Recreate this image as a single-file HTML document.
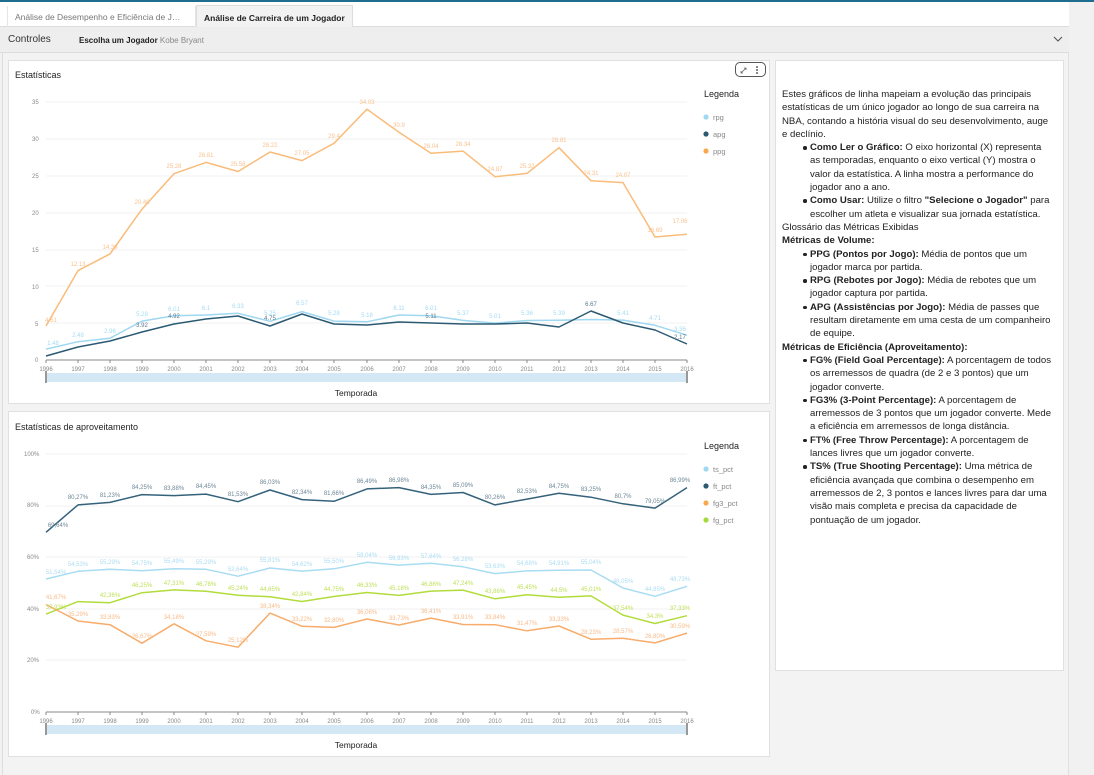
<!DOCTYPE html>
<html><head><meta charset="utf-8"><style>
*{margin:0;padding:0;box-sizing:border-box}
body{width:1094px;height:775px;overflow:hidden;background:#f2f2f2;font-family:"Liberation Sans",sans-serif;position:relative;color:#16191f}
.top{position:absolute;left:0;top:0;width:1094px;height:2px;background:#1c6d8f}
.tabs{position:absolute;left:0;top:2px;width:1069px;height:25px;background:#fff;border-bottom:1px solid #ddd}
.tab1{position:absolute;left:7px;top:4px;width:189px;height:21px;border-left:1px solid #e5e5e5;border-right:1px solid #e5e5e5;font-size:8.5px;color:#777;padding:6px 0 0 7px;white-space:nowrap;overflow:hidden}
.tab2{position:absolute;left:196px;top:3px;width:157px;height:24px;background:#f2f2f2;border:1px solid #ddd;border-bottom:none;font-size:8.5px;font-weight:bold;color:#222;padding:7px 0 0 7px;white-space:nowrap}
.ctrl{position:absolute;left:0;top:27px;width:1069px;height:26px;background:#eeeeee;border-bottom:1px solid #dcdcdc}
.ctrl .a{position:absolute;left:8px;top:7px;font-size:10px;color:#333}
.ctrl .b{position:absolute;left:79px;top:9px;font-size:8px;color:#222;font-weight:bold}
.ctrl .b span{font-weight:normal;color:#888}
.main{position:absolute;left:2px;top:53px;width:1067px;height:722px;background:#f3f3f3;border-left:1px solid #ddd;border-right:1px solid #e0e0e0}
.side{position:absolute;left:1069px;top:2px;width:25px;height:773px;background:#f1f1f1}
.panel{position:absolute;background:#fff;border:1px solid #e0e0e0}
.ptitle{position:absolute;left:7px;font-size:9px;color:#222}
.txt{position:absolute;left:782px;top:88px;width:272px;font-size:9.6px;line-height:13.3px;color:#222}
.txt ul{margin-left:21px;list-style:none}
.txt li{position:relative;padding-left:7px}
.txt li:before{content:"";position:absolute;left:0;top:5px;width:3.5px;height:3.5px;border-radius:50%;background:#222}
svg text{font-family:"Liberation Sans",sans-serif}
</style></head><body>
<div class="top"></div>
<div class="tabs">
<div class="tab1">Análise de Desempenho e Eficiência de J…</div>
<div class="tab2">Análise de Carreira de um Jogador</div>
</div>
<div class="ctrl"><div class="a">Controles</div><div class="b">Escolha um Jogador <span>Kobe Bryant</span></div>
<svg style="position:absolute;left:1053px;top:9px" width="10" height="7"><path d="M1 1L5 5L9 1" fill="none" stroke="#555" stroke-width="1.1"/></svg></div>
<div class="main"></div>
<div class="side"></div>

<div class="panel" style="left:8px;top:60px;width:762px;height:344px"></div>
<div class="panel" style="left:8px;top:411px;width:762px;height:346px"></div>
<div class="panel" style="left:775px;top:60px;width:289px;height:611px"></div>
<div class="ptitle" style="left:15px;top:70px">Estatísticas</div>
<div class="ptitle" style="left:15px;top:422px">Estatísticas de aproveitamento</div>
<div style="position:absolute;left:735px;top:62px;width:31px;height:15px;border:1px solid #555;border-radius:5px;background:#fff"></div>
<svg style="position:absolute;left:739px;top:65px" width="24" height="10"><path d="M2 8L7 3M5 3H7V5M2 6V8H4" fill="none" stroke="#666" stroke-width=".8"/><circle cx="18" cy="2" r=".9" fill="#333"/><circle cx="18" cy="5" r=".9" fill="#333"/><circle cx="18" cy="8" r=".9" fill="#333"/></svg>

<svg style="position:absolute;left:0;top:0" width="1094" height="775">
<g font-size="6" fill="#888">
<text x="32" y="104">35</text><text x="32" y="141">30</text><text x="32" y="178">25</text><text x="32" y="215">20</text><text x="32" y="252">15</text><text x="32" y="289">10</text><text x="35" y="326">5</text><text x="35" y="362">0</text>
<text x="24" y="456">100%</text><text x="27" y="507">80%</text><text x="27" y="559">60%</text><text x="27" y="611">40%</text><text x="27" y="662">20%</text><text x="31" y="714">0%</text>
</g>
<g stroke="#f0f0f0" stroke-width="1">
<path d="M46 102H687M46 139H687M46 176H687M46 213H687M46 250H687M46 286H687M46 323H687"/>
<path d="M46 454H687M46 506H687M46 557H687M46 609H687M46 660H687"/>
</g>
<path d="M46 360H687M46 712H687" stroke="#888" stroke-width="1"/>
<g stroke="#888" stroke-width="1">
<path d="M46 360v3M78 360v3M110 360v3M142 360v3M174 360v3M206 360v3M238 360v3M270 360v3M302 360v3M334 360v3M367 360v3M399 360v3M431 360v3M463 360v3M495 360v3M527 360v3M559 360v3M591 360v3M623 360v3M655 360v3M687 360v3"/>
<path d="M46 712v3M78 712v3M110 712v3M142 712v3M174 712v3M206 712v3M238 712v3M270 712v3M302 712v3M334 712v3M367 712v3M399 712v3M431 712v3M463 712v3M495 712v3M527 712v3M559 712v3M591 712v3M623 712v3M655 712v3M687 712v3"/>
</g>
<g font-size="6" fill="#888" text-anchor="middle">
<text x="46" y="371">1996</text><text x="78" y="371">1997</text><text x="110" y="371">1998</text><text x="142" y="371">1999</text><text x="174" y="371">2000</text><text x="206" y="371">2001</text><text x="238" y="371">2002</text><text x="270" y="371">2003</text><text x="302" y="371">2004</text><text x="334" y="371">2005</text><text x="367" y="371">2006</text><text x="399" y="371">2007</text><text x="431" y="371">2008</text><text x="463" y="371">2009</text><text x="495" y="371">2010</text><text x="527" y="371">2011</text><text x="559" y="371">2012</text><text x="591" y="371">2013</text><text x="623" y="371">2014</text><text x="655" y="371">2015</text><text x="687" y="371">2016</text>
<text x="46" y="723">1996</text><text x="78" y="723">1997</text><text x="110" y="723">1998</text><text x="142" y="723">1999</text><text x="174" y="723">2000</text><text x="206" y="723">2001</text><text x="238" y="723">2002</text><text x="270" y="723">2003</text><text x="302" y="723">2004</text><text x="334" y="723">2005</text><text x="367" y="723">2006</text><text x="399" y="723">2007</text><text x="431" y="723">2008</text><text x="463" y="723">2009</text><text x="495" y="723">2010</text><text x="527" y="723">2011</text><text x="559" y="723">2012</text><text x="591" y="723">2013</text><text x="623" y="723">2014</text><text x="655" y="723">2015</text><text x="687" y="723">2016</text>
</g>
<rect x="46" y="373" width="641" height="9" fill="#d3e8f4"/><rect x="45" y="371" width="2" height="12" fill="#999"/><rect x="686" y="371" width="2" height="12" fill="#999"/>
<rect x="46" y="725" width="641" height="9" fill="#d3e8f4"/><rect x="45" y="723" width="2" height="12" fill="#999"/><rect x="686" y="723" width="2" height="12" fill="#999"/>
<g font-size="8.5" fill="#222" text-anchor="middle"><text x="356" y="396">Temporada</text><text x="356" y="748">Temporada</text></g>

<g fill="none" stroke-width="1.5" stroke-linejoin="round">
<polyline stroke="#f9bc7a" points="46,326 78,270.6 110,253.9 142,209.1 174,173.7 206,162.4 238,171.5 270,152 302,160.6 334,143.3 367,109.2 399,132.3 431,153.3 463,151.1 495,176.7 527,173.4 559,147.7 591,180.8 623,182.6 655,237 687,234.3"/>
<polyline stroke="#9fd8f0" points="46,349.1 78,341.7 110,338.2 142,321.1 174,315.7 206,315 238,313.3 270,321.3 302,311.6 334,321.1 367,321.8 399,315 431,315.7 463,320.4 495,323.1 527,320.5 559,320.3 591,319.5 623,320.1 655,325.3 687,335.2"/>
<polyline stroke="#2c5a73" points="46,356 78,347 110,341 142,332 174,324 206,319 238,316 270,326 302,314 334,324 367,325 399,322 431,323 463,324 495,324 527,323 559,327 591,311 623,323 655,330 687,344"/>
<polyline stroke="#34627b" points="46,532.3 78,504.9 110,502.4 142,494.6 174,495.6 206,494.1 238,501.7 270,490 302,499.6 334,501.3 367,488.9 399,487.6 431,494.4 463,492.5 495,504.9 527,499.1 559,493.3 591,497.2 623,503.8 655,508.1 687,487.6"/>
<polyline stroke="#a8dcf2" points="46,579 78,571.3 110,569.3 142,570.7 174,568.8 206,569.3 238,576.2 270,568 302,571.1 334,568.8 367,562.3 399,565.1 431,563.3 463,566.8 495,573.6 527,570.9 559,570.3 591,570 623,588 655,596.3 687,586.3"/>
<polyline stroke="#b2dc3c" points="46,614.1 78,601.6 110,602.7 142,592.7 174,589.9 206,591.3 238,595.3 270,596.8 302,601.5 334,596.5 367,592.5 399,595.4 431,591.1 463,590.1 495,598.8 527,594.7 559,597.2 591,595.9 623,615.1 655,623.5 687,615.7"/>
<polyline stroke="#f7ac6c" points="46,604.5 78,621 110,624.7 142,643.2 174,623.8 206,640.8 238,647.2 270,613.1 302,626.3 334,627.4 367,619 399,625 431,618.1 463,624.5 495,624.7 527,630.8 559,626 591,639.2 623,638.3 655,642.9 687,633.1"/>
</g>

<g font-size="6" text-anchor="middle" fill="#f8c290">
<text x="51" y="322">4.61</text><text x="78" y="266">12.13</text><text x="110" y="249">14.39</text><text x="142" y="204">20.48</text><text x="174" y="168">25.28</text><text x="206" y="157">26.81</text><text x="238" y="166">25.58</text><text x="270" y="147">28.22</text><text x="302" y="155">27.05</text><text x="334" y="138">29.4</text><text x="367" y="104">34.03</text><text x="399" y="127">30.9</text><text x="431" y="148">28.04</text><text x="463" y="146">28.34</text><text x="495" y="171">24.87</text><text x="527" y="168">25.32</text><text x="559" y="142">28.81</text><text x="591" y="175">24.31</text><text x="623" y="177">24.07</text><text x="655" y="232">16.69</text><text x="680" y="223">17.06</text>
</g>
<g font-size="6" text-anchor="middle" fill="#a5dcf2">
<text x="53" y="345">1.48</text><text x="78" y="337">2.48</text><text x="110" y="333">2.96</text><text x="142" y="316">5.28</text><text x="174" y="311">6.01</text><text x="206" y="310">6.1</text><text x="238" y="308">6.33</text><text x="270" y="315">5.25</text><text x="302" y="305">6.57</text><text x="334" y="315">5.28</text><text x="367" y="317">5.18</text><text x="399" y="310">6.11</text><text x="431" y="310">6.01</text><text x="463" y="315">5.37</text><text x="495" y="318">5.01</text><text x="527" y="315">5.36</text><text x="559" y="315">5.39</text><text x="623" y="315">5.41</text><text x="655" y="320">4.71</text><text x="680" y="331">3.36</text>
</g>
<g font-size="6" text-anchor="middle" fill="#5a7a8c">
<text x="142" y="327">3.92</text><text x="174" y="318">4.92</text><text x="270" y="320">4.75</text><text x="431" y="318">5.11</text><text x="591" y="306">6.67</text><text x="680" y="339">2.17</text>
</g>
<g font-size="6" text-anchor="middle" fill="#6d8797">
<text x="58" y="527">69,64%</text><text x="78" y="499">80,27%</text><text x="110" y="497">81,23%</text><text x="142" y="489">84,25%</text><text x="174" y="490">83,88%</text><text x="206" y="488">84,45%</text><text x="238" y="496">81,53%</text><text x="270" y="484">86,03%</text><text x="302" y="494">82,34%</text><text x="334" y="495">81,66%</text><text x="367" y="483">86,49%</text><text x="399" y="482">86,98%</text><text x="431" y="489">84,35%</text><text x="463" y="487">85,09%</text><text x="495" y="499">80,26%</text><text x="527" y="493">82,53%</text><text x="559" y="488">84,75%</text><text x="591" y="491">83,25%</text><text x="623" y="498">80,7%</text><text x="655" y="503">79,05%</text><text x="680" y="482">86,99%</text>
</g>
<g font-size="6" text-anchor="middle" fill="#abdcf2">
<text x="56" y="574">51,54%</text><text x="78" y="566">54,53%</text><text x="110" y="564">55,29%</text><text x="142" y="565">54,75%</text><text x="174" y="563">55,49%</text><text x="206" y="564">55,29%</text><text x="238" y="571">52,64%</text><text x="270" y="562">55,81%</text><text x="302" y="566">54,62%</text><text x="334" y="563">55,50%</text><text x="367" y="557">58,04%</text><text x="399" y="560">56,93%</text><text x="431" y="558">57,64%</text><text x="463" y="561">56,28%</text><text x="495" y="568">53,63%</text><text x="527" y="565">54,68%</text><text x="559" y="565">54,91%</text><text x="591" y="564">55,04%</text><text x="623" y="583">48,05%</text><text x="655" y="591">44,85%</text><text x="680" y="581">48,73%</text>
</g>
<g font-size="6" text-anchor="middle" fill="#bfe05a">
<text x="56" y="609">37,93%</text><text x="110" y="597">42,36%</text><text x="142" y="587">46,25%</text><text x="174" y="585">47,31%</text><text x="206" y="586">46,78%</text><text x="238" y="590">45,24%</text><text x="270" y="591">44,65%</text><text x="302" y="596">42,84%</text><text x="334" y="591">44,75%</text><text x="367" y="587">46,33%</text><text x="399" y="590">45,18%</text><text x="431" y="586">46,86%</text><text x="463" y="585">47,24%</text><text x="495" y="593">43,86%</text><text x="527" y="589">45,45%</text><text x="559" y="592">44,5%</text><text x="591" y="591">45,01%</text><text x="623" y="610">37,54%</text><text x="655" y="618">34,3%</text><text x="680" y="610">37,33%</text>
</g>
<g font-size="6" text-anchor="middle" fill="#f8bb88">
<text x="56" y="599">41,67%</text><text x="78" y="616">35,29%</text><text x="110" y="619">33,83%</text><text x="142" y="638">26,67%</text><text x="174" y="619">34,18%</text><text x="206" y="636">27,59%</text><text x="238" y="642">25,12%</text><text x="270" y="608">38,34%</text><text x="302" y="621">33,22%</text><text x="334" y="622">32,80%</text><text x="367" y="614">36,06%</text><text x="399" y="620">33,73%</text><text x="431" y="613">36,41%</text><text x="463" y="619">33,91%</text><text x="495" y="619">33,84%</text><text x="527" y="625">31,47%</text><text x="559" y="621">33,33%</text><text x="591" y="634">28,23%</text><text x="623" y="633">28,57%</text><text x="655" y="638">26,80%</text><text x="680" y="628">30,59%</text>
</g>

<g font-size="9" fill="#222"><text x="704" y="97">Legenda</text><text x="704" y="449">Legenda</text></g>
<g font-size="7.5" fill="#888">
<circle cx="706" cy="117" r="2.6" fill="#9fd8f0"/><text x="713" y="120">rpg</text>
<circle cx="706" cy="134" r="2.6" fill="#2c5a73"/><text x="713" y="137">apg</text>
<circle cx="706" cy="151" r="2.6" fill="#f8a94f"/><text x="713" y="154">ppg</text>
<circle cx="706" cy="469" r="2.6" fill="#9fd8f0"/><text x="713" y="472">ts_pct</text>
<circle cx="706" cy="486" r="2.6" fill="#2c5a73"/><text x="713" y="489">ft_pct</text>
<circle cx="706" cy="503" r="2.6" fill="#f8a94f"/><text x="713" y="506">fg3_pct</text>
<circle cx="706" cy="520" r="2.6" fill="#a6d93b"/><text x="713" y="523">fg_pct</text>
</g>
</svg>

<div class="txt">
Estes gráficos de linha mapeiam a evolução das principais estatísticas de um único jogador ao longo de sua carreira na NBA, contando a história visual do seu desenvolvimento, auge e declínio.
<ul><li><b>Como Ler o Gráfico:</b> O eixo horizontal (X) representa as temporadas, enquanto o eixo vertical (Y) mostra o valor da estatística. A linha mostra a performance do jogador ano a ano.</li>
<li><b>Como Usar:</b> Utilize o filtro <b>"Selecione o Jogador"</b> para escolher um atleta e visualizar sua jornada estatística.</li></ul>
Glossário das Métricas Exibidas<br><b>Métricas de Volume:</b>
<ul><li><b>PPG (Pontos por Jogo):</b> Média de pontos que um jogador marca por partida.</li>
<li><b>RPG (Rebotes por Jogo):</b> Média de rebotes que um jogador captura por partida.</li>
<li><b>APG (Assistências por Jogo):</b> Média de passes que resultam diretamente em uma cesta de um companheiro de equipe.</li></ul>
<b>Métricas de Eficiência (Aproveitamento):</b>
<ul><li><b>FG% (Field Goal Percentage):</b> A porcentagem de todos os arremessos de quadra (de 2 e 3 pontos) que um jogador converte.</li>
<li><b>FG3% (3-Point Percentage):</b> A porcentagem de arremessos de 3 pontos que um jogador converte. Mede a eficiência em arremessos de longa distância.</li>
<li><b>FT% (Free Throw Percentage):</b> A porcentagem de lances livres que um jogador converte.</li>
<li><b>TS% (True Shooting Percentage):</b> Uma métrica de eficiência avançada que combina o desempenho em arremessos de 2, 3 pontos e lances livres para dar uma visão mais completa e precisa da capacidade de pontuação de um jogador.</li></ul>
</div>
</body></html>
